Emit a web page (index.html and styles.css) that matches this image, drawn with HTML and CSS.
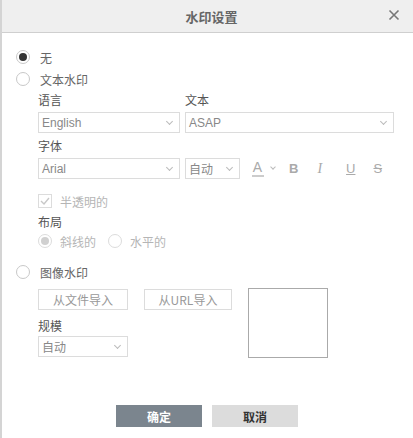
FILE: index.html
```html
<!DOCTYPE html>
<html lang="zh">
<head>
<meta charset="utf-8">
<title>水印设置</title>
<link rel="stylesheet" href="styles.css">
</head>
<body>
<div class="dialog">
  <div class="header">
    <span class="title">水印设置</span>
    <span class="close">
      <svg width="12" height="12" viewBox="0 0 12 12"><path d="M1.5 1.5 L10.5 10.5 M10.5 1.5 L1.5 10.5" stroke="#777" stroke-width="1.6" fill="none"/></svg>
    </span>
  </div>
  <div class="content">
    <div class="radio-row"><span class="radio checked"></span><span class="rlabel">无</span></div>
    <div class="radio-row"><span class="radio"></span><span class="rlabel">文本水印</span></div>

    <div class="text-section">
      <div class="grid2">
        <div class="field">
          <div class="label">语言</div>
          <div class="select w142"><span>English</span><span class="chev"></span></div>
        </div>
        <div class="field">
          <div class="label">文本</div>
          <div class="select w209"><span>ASAP</span><span class="chev"></span></div>
        </div>
      </div>
      <div class="grid2 mt">
        <div class="field">
          <div class="label">字体</div>
          <div class="select w142"><span>Arial</span><span class="chev"></span></div>
        </div>
        <div class="field">
          <div class="label">&nbsp;</div>
          <div class="toolbar">
            <div class="select w55"><span>自动</span><span class="chev"></span></div>
            <span class="tool color"><span class="a">A</span><span class="bar"></span></span>
            <span class="chev small"></span>
            <span class="tool bold">B</span>
            <span class="tool ital">I</span>
            <span class="tool under">U</span>
            <span class="tool strike">S</span>
          </div>
        </div>
      </div>
      <div class="check-row"><span class="checkbox"><svg width="10" height="8" viewBox="0 0 10 8"><path d="M1 4 L4 7 L9 1" stroke="#c8c8c8" stroke-width="1.4" fill="none"/></svg></span><span class="dlabel">半透明的</span></div>
      <div class="label">布局</div>
      <div class="layout-row">
        <span class="radio disabled checked"></span><span class="dlabel">斜线的</span>
        <span class="radio disabled sp"></span><span class="dlabel">水平的</span>
      </div>
    </div>

    <div class="radio-row img-row"><span class="radio"></span><span class="rlabel">图像水印</span></div>
    <div class="img-section">
      <div class="img-left">
        <div class="btns">
          <span class="btn">从文件导入</span>
          <span class="btn">从URL导入</span>
        </div>
        <div class="label scale">规模</div>
        <div class="select w90"><span>自动</span><span class="chev"></span></div>
      </div>
      <div class="preview"></div>
    </div>
  </div>
  <div class="footer">
    <span class="fbtn ok">确定</span>
    <span class="fbtn cancel">取消</span>
  </div>
</div>
</body>
</html>
```
FILE: styles.css
```css
html, body {
  margin: 0;
  padding: 0;
  background: #fff;
}
body {
  width: 413px;
  height: 438px;
  overflow: hidden;
  font-family: "Liberation Sans", "Noto Sans CJK SC", sans-serif;
  font-size: 12px;
  color: #333;
}
.dialog {
  height: 438px;
  border-left: 2px solid #d4d4d4;
  box-sizing: border-box;
  display: flex;
  flex-direction: column;
}
.header {
  height: 32px;
  background: #efefef;
  border-bottom: 1px solid #cfcfcf;
  display: flex;
  align-items: center;
  justify-content: center;
  position: relative;
  flex-shrink: 0;
}
.title {
  font-family: "Noto Sans CJK SC", sans-serif;
  font-size: 13px;
  font-weight: 700;
  color: #666;
  margin-left: 8px;
}
.close {
  position: absolute;
  right: 13px;
  top: 9px;
  width: 12px;
  height: 12px;
  display: flex;
}
.content {
  padding: 13px 0 0 14px;
  flex: 1;
}
.radio-row {
  display: flex;
  align-items: center;
  height: 22px;
}
.radio {
  width: 12px;
  height: 12px;
  border: 1px solid #c8c8c8;
  border-radius: 50%;
  box-sizing: content-box;
  display: inline-flex;
  align-items: center;
  justify-content: center;
  flex-shrink: 0;
}
.radio.checked::after {
  content: "";
  width: 8px;
  height: 8px;
  border-radius: 50%;
  background: #333;
}
.radio.disabled {
  border-color: #dcdcdc;
}
.radio.disabled.checked::after {
  background: #d0d0d0;
}
.rlabel {
  margin-left: 10px;
  font-family: "Noto Sans CJK SC", sans-serif;
  font-size: 12px;
  color: #666;
}
.text-section {
  padding-left: 22px;
  padding-top: 1px;
}
.grid2 {
  display: grid;
  grid-template-columns: 147px auto;
}
.grid2.mt {
  margin-top: 4px;
}
.label {
  font-family: "Noto Sans CJK SC", sans-serif;
  font-size: 12px;
  color: #555;
  height: 18px;
  line-height: 18px;
  margin-bottom: 3px;
}
.select {
  height: 21px;
  border: 1px solid #dcdcdc;
  box-sizing: border-box;
  display: flex;
  align-items: center;
  justify-content: space-between;
  padding: 0 7px 0 3px;
  color: #888;
  font-size: 12px;
  font-family: "Liberation Sans", "Noto Sans CJK SC", sans-serif;
}
.w142 { width: 142px; }
.w209 { width: 209px; }
.w55 { width: 55px; }
.w90 { width: 90px; }
.chev {
  width: 4px;
  height: 4px;
  border-right: 1px solid #bbb;
  border-bottom: 1px solid #bbb;
  transform: rotate(45deg);
  margin-top: -3px;
}
.toolbar {
  display: flex;
  align-items: center;
  height: 21px;
}
.tool {
  font-family: "Liberation Sans", sans-serif;
  color: #aaa;
  font-size: 13px;
}
.color {
  margin-left: 12px;
  display: flex;
  flex-direction: column;
  align-items: center;
  width: 11px;
}
.color .a {
  font-size: 14px;
  line-height: 14px;
}
.color .bar {
  width: 12px;
  height: 2px;
  background: #ccc;
  margin-top: 1px;
}
.chev.small {
  margin-left: 8px;
  width: 3px;
  height: 3px;
}
.bold { font-weight: 700; margin-left: 14px; }
.ital { font-style: italic; margin-left: 19px; font-family: "Liberation Serif", serif; font-size: 14px; }
.under { text-decoration: underline; margin-left: 24px; }
.strike { text-decoration: line-through; margin-left: 18px; }
.check-row {
  display: flex;
  align-items: center;
  height: 18px;
  margin-top: 13px;
  margin-bottom: 3px;
}
.checkbox {
  width: 12px;
  height: 12px;
  border: 1px solid #dcdcdc;
  display: inline-flex;
  align-items: center;
  justify-content: center;
}
.dlabel {
  font-family: "Noto Sans CJK SC", sans-serif;
  color: #b5b5b5;
  margin-left: 8px;
}
.layout-row {
  display: flex;
  align-items: center;
  height: 18px;
  margin-top: -2px;
}
.radio.sp {
  margin-left: 12px;
}
.img-row {
  margin-top: 11px;
}
.img-section {
  display: flex;
  padding-left: 22px;
  margin-top: 6px;
}
.img-left {
  width: 194px;
}
.btns {
  display: flex;
  gap: 16px;
}
.btn {
  width: 90px;
  height: 21px;
  border: 1px solid #dcdcdc;
  box-sizing: border-box;
  display: flex;
  align-items: center;
  justify-content: center;
  font-family: "Noto Sans CJK SC", sans-serif;
  color: #999;
  font-size: 12px;
}
.btn + .btn { width: 88px; }
.label.scale {
  margin-top: 7px;
  margin-bottom: 1px;
}
.preview {
  width: 80px;
  height: 70px;
  border: 1px solid #aaa;
  box-sizing: border-box;
  margin-left: 16px;
  margin-top: -1px;
}
.footer {
  display: flex;
  justify-content: center;
  gap: 10px;
  padding-bottom: 11px;
  padding-right: 1px;
}
.fbtn {
  width: 86px;
  height: 22px;
  display: flex;
  align-items: center;
  justify-content: center;
  font-family: "Noto Sans CJK SC", sans-serif;
  font-weight: 700;
  font-size: 12px;
}
.ok { background: #7b858e; color: #fff; }
.cancel { background: #dcdcdc; color: #333; }
```
